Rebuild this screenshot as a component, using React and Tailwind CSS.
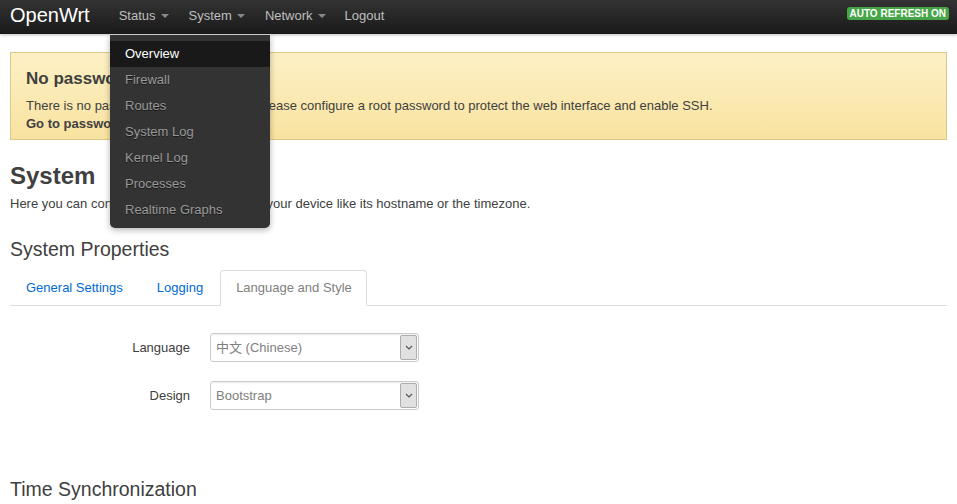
const menuItems = ["Overview", "Firewall", "Routes", "System Log", "Kernel Log", "Processes", "Realtime Graphs"];

const Caret = () => (
	<span className="ml-[5px] inline-block align-middle border-x-[4px] border-t-[4px] border-x-transparent border-t-[#888] mt-[-2px]" />
);

const SelectBox = ({ value }) => (
	<div className="flex h-[29px] w-[209px] border border-[#ccc] rounded-[3px] bg-white shadow-[inset_0_1px_2px_rgba(0,0,0,0.08)]">
		<div className="flex-1 flex items-center pl-[5px] text-[13px] text-[#808080]">{value}</div>
		<div className="w-[17px] my-[1px] mr-[1px] flex items-center justify-center bg-[#e1e1e1] border border-[#adadad] rounded-[2px]">
			<svg width="8" height="5" viewBox="0 0 8 5">
				<path d="M1 1l3 3 3-3" fill="none" stroke="#555" strokeWidth="1.2" />
			</svg>
		</div>
	</div>
);

export default function App() {
	return (
		<div className="relative min-h-[504px] bg-white text-[#404040] font-['Liberation_Sans','Noto_Sans_CJK_SC',Arial,sans-serif] overflow-hidden">
			<div className="h-[34px] flex items-center px-[10px] bg-gradient-to-b from-[#333] to-[#1a1a1a] shadow-[0_1px_3px_rgba(0,0,0,0.25)]">
				<span className="text-white text-[20px] mr-[28px] mt-[-4px]">OpenWrt</span>
				<nav className="flex items-center text-[13px] text-[#bfbfbf] mt-[-2px] ml-[1px]">
					<span className="mr-[20px]">Status<Caret /></span>
					<span className="mr-[20px]">System<Caret /></span>
					<span className="mr-[19px]">Network<Caret /></span>
					<span>Logout</span>
				</nav>
				<span className="ml-auto mr-[-2px] mt-[-8px] bg-[#46a546] text-white text-[10px] font-bold leading-[13px] px-[3px] rounded-[3px]">AUTO REFRESH ON</span>
			</div>

			<div className="absolute left-[110px] top-[35px] w-[160px] bg-[#333] rounded-b-[5px] shadow-[0_2px_6px_rgba(0,0,0,0.3)] pt-[6px] pb-[5px] z-10">
				{menuItems.map((item, i) => (
					<div
						key={item}
						className={`h-[26px] flex items-center px-[15px] text-[13px] ${i === 0 ? "bg-[#191919] text-white" : "text-[#999] [text-shadow:0_1px_0_rgba(0,0,0,0.5)]"}`}>
						{item}
					</div>
				))}
			</div>

			<div className="px-[10px]">
				<div className="mt-[18px] border border-[#d9c98c] bg-gradient-to-b from-[#fdf0c5] to-[#f8e3a0] px-[15px] pt-[15px] pb-[6px]">
					<h4 className="text-[17px] font-bold text-[#404040] leading-[22px]">No password set!</h4>
					<p className="text-[13px] leading-[18px] mt-[7px]">
						There is no password set on this router. Please configure a root password to protect the web interface and enable SSH.
					</p>
					<p className="text-[13px] leading-[18px] font-bold">Go to password configuration...</p>
				</div>

				<h2 className="text-[24px] font-bold leading-[30px] mt-[21px]">System</h2>
				<p className="text-[13px] leading-[18px] mt-[4px]">
					Here you can configure the basic aspects of your device like its hostname or the timezone.
				</p>

				<h3 className="text-[19.5px] leading-[26px] mt-[23px]">System Properties</h3>
				<div className="flex mt-[8px] border-b border-[#ddd] h-[36px]">
					<span className="px-[16px] flex items-center text-[13px] text-[#0069d6]">General Settings</span>
					<span className="pl-[18px] pr-[15px] flex items-center text-[13px] text-[#0069d6]">Logging</span>
					<span className="ml-[2px] pl-[15px] pr-[14px] flex items-center text-[13px] text-[#808080] bg-white border border-[#ddd] border-b-white rounded-t-[4px] mb-[-1px]">
						Language and Style
					</span>
				</div>

				<div className="mt-[27px] flex flex-col gap-[19px]">
					<div className="flex items-center">
						<label className="w-[180px] text-right text-[13px]">Language</label>
						<div className="ml-[20px]"><SelectBox value="中文 (Chinese)" /></div>
					</div>
					<div className="flex items-center">
						<label className="w-[180px] text-right text-[13px]">Design</label>
						<div className="ml-[20px]"><SelectBox value="Bootstrap" /></div>
					</div>
				</div>

				<h3 className="text-[19.5px] leading-[26px] mt-[66px]">Time Synchronization</h3>
			</div>
		</div>
	);
}
